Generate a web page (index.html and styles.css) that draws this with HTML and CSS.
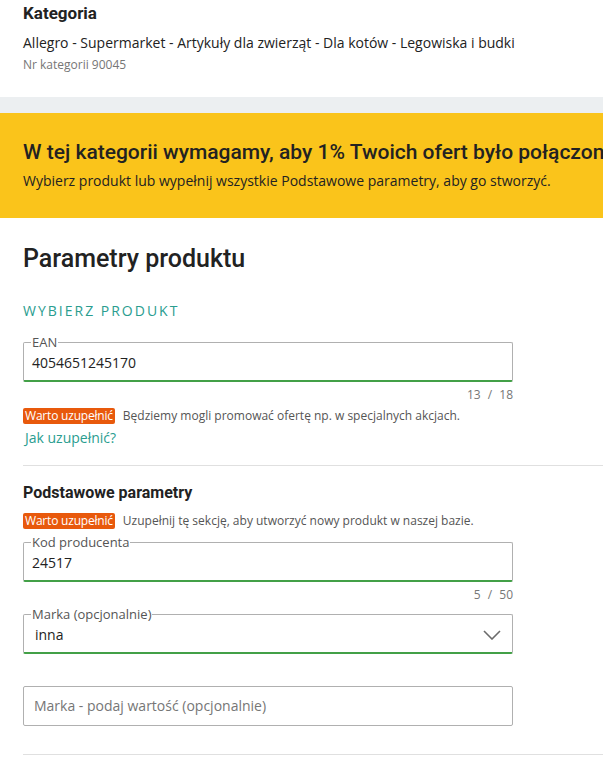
FILE: index.html
```html
<!DOCTYPE html>
<html lang="pl">
<head>
<meta charset="utf-8">
<link rel="stylesheet" href="styles.css">
</head>
<body>
<section class="category">
  <h2 class="cat-title">Kategoria</h2>
  <p class="cat-path">Allegro - Supermarket - Artykuły dla zwierząt - Dla kotów - Legowiska i budki</p>
  <p class="cat-id">Nr kategorii 90045</p>
</section>
<div class="band"></div>
<section class="notice">
  <h3 class="notice-title">W tej kategorii wymagamy, aby 1% Twoich ofert było połączonych z produktem</h3>
  <p class="notice-text">Wybierz produkt lub wypełnij wszystkie Podstawowe parametry, aby go stworzyć.</p>
</section>
<section class="params">
  <h1 class="params-title">Parametry produktu</h1>
  <h4 class="overline">WYBIERZ PRODUKT</h4>
  <div class="field-wrap">
    <fieldset class="field filled first">
      <legend>EAN</legend>
      <div class="value">4054651245170</div>
    </fieldset>
    <div class="counter">13 / 18</div>
  </div>
  <div class="hint"><span class="badge">Warto uzupełnić</span><span class="hint-text">Będziemy mogli promować ofertę np. w specjalnych akcjach.</span></div>
  <a class="link" href="#">Jak uzupełnić?</a>
  <hr class="divider">
  <h3 class="sub-title">Podstawowe parametry</h3>
  <div class="hint hint-tight"><span class="badge">Warto uzupełnić</span><span class="hint-text">Uzupełnij tę sekcję, aby utworzyć nowy produkt w naszej bazie.</span></div>
  <div class="field-wrap">
    <fieldset class="field filled">
      <legend>Kod producenta</legend>
      <div class="value">24517</div>
    </fieldset>
    <div class="counter">5 / 50</div>
  </div>
  <div class="field-wrap">
    <fieldset class="field filled select">
      <legend>Marka (opcjonalnie)</legend>
      <div class="value">inna</div>
      <svg class="chevron" width="18" height="10" viewBox="0 0 18 10"><path d="M1 1 L9 9 L17 1" fill="none" stroke="#6b6b6b" stroke-width="1.6"/></svg>
    </fieldset>
  </div>
  <div class="plain">Marka - podaj wartość (opcjonalnie)</div>
  <hr class="divider divider-last">
</section>
</body>
</html>
```
FILE: styles.css
```css
html, body {
  margin: 0;
  padding: 0;
  background: #fff;
  overflow: hidden;
}
body {
  width: 603px;
  font-family: "Open Sans", "Liberation Sans", sans-serif;
  color: #222;
}
h1, h2, h3, h4, p { margin: 0; }

.category {
  padding: 3px 23px 0;
  height: 94px;
  box-sizing: border-box;
}
.cat-title {
  font-family: Roboto, sans-serif;
  font-weight: 700;
  font-size: 17px;
  line-height: 20px;
  color: #222;
}
.cat-path {
  margin-top: 10px;
  font-size: 14px;
  line-height: 20px;
  color: #222;
}
.cat-id {
  margin-top: 4px;
  font-size: 12px;
  line-height: 16px;
  color: #767676;
}
.band {
  height: 16px;
  margin-top: 3px;
  background: #eceff1;
}
.notice {
  background: #fac41b;
  height: 105px;
  box-sizing: border-box;
  padding: 26px 0 0 23px;
  white-space: nowrap;
  overflow: hidden;
}
.notice-title {
  font-family: Roboto, sans-serif;
  font-weight: 500;
  font-size: 21px;
  line-height: 26px;
  color: #222;
}
.notice-text {
  margin-top: 6px;
  font-size: 14px;
  line-height: 20px;
  color: #222;
}
.params {
  padding: 26px 0 0 23px;
}
.params-title {
  font-family: Roboto, sans-serif;
  font-weight: 500;
  font-size: 25px;
  line-height: 30px;
  color: #222;
}
.overline {
  margin-top: 27px;
  font-weight: 400;
  font-size: 14px;
  line-height: 20px;
  letter-spacing: 2px;
  color: #2a9d8f;
}
.field-wrap {
  width: 490px;
}
.field {
  margin: 3px 0 0;
  padding: 0 8px 7px;
  border: 1px solid #b0b0b0;
  border-radius: 2px;
  min-width: 0;
}
.field.first { margin-top: 13px; }
.field.filled {
  border-bottom: 2px solid #43a047;
}
.field legend {
  padding: 0 1px;
  margin-left: -1px;
  font-size: 13px;
  line-height: 16px;
  color: #555;
}
.value {
  font-size: 14px;
  line-height: 20px;
  padding-top: 3px;
  color: #222;
}
.select {
  display: flex;
  align-items: center;
  justify-content: space-between;
}
.select .value {
  padding-left: 3px;
}
.select .chevron {
  margin-right: 3px;
  margin-top: 2px;
}
.counter {
  text-align: right;
  font-size: 12px;
  line-height: 16px;
  color: #777;
  word-spacing: 4px;
  margin-top: 5px;
}
.hint {
  display: flex;
  align-items: center;
  gap: 8px;
  margin-top: 5px;
}
.hint-tight { margin-top: 10px; }
.hint-tight + .field-wrap .field { margin-top: 5px; }
.badge {
  background: #e8590c;
  color: #fff;
  font-size: 12px;
  line-height: 16px;
  padding: 0 2px;
  border-radius: 2px;
  letter-spacing: -0.2px;
}
.hint-text {
  font-size: 12px;
  line-height: 16px;
  color: #555;
}
.link {
  display: block;
  margin-top: 4px;
  margin-left: 2px;
  font-size: 14px;
  line-height: 20px;
  color: #2a9d8f;
  text-decoration: none;
}
.divider {
  margin: 17px 0 0;
  border: 0;
  border-top: 1px solid #e0e0e0;
  height: 0;
}
.sub-title {
  margin-top: 17px;
  font-family: Roboto, sans-serif;
  font-weight: 700;
  font-size: 16px;
  line-height: 20px;
  color: #222;
}
.plain {
  margin-top: 32px;
  width: 490px;
  box-sizing: border-box;
  height: 40px;
  border: 1px solid #b0b0b0;
  border-radius: 2px;
  padding: 0 10px;
  font-size: 14px;
  line-height: 38px;
  color: #767676;
}
.divider-last {
  margin-top: 28px;
}
```
